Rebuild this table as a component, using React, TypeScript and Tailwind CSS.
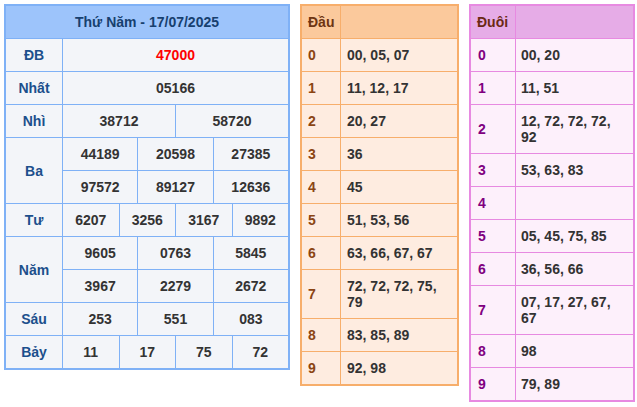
import React from "react";

const font = { fontFamily: '"Liberation Sans", Arial, sans-serif' };

function LeftTable() {
  const lab = "bg-[#f3f5f9] flex items-center justify-center text-[#1c4f8c] font-bold";
  const val = "bg-[#f3f5f9] flex items-center justify-center text-[#333333] font-bold";
  return (
    <div className="w-[286px] border-2 border-[#7fb1f6] bg-[#7fb1f6] grid grid-cols-[56px_repeat(12,minmax(0,1fr))] grid-rows-[repeat(11,32px)] gap-px text-[14px] leading-4">
      <div className="col-span-full bg-[#9dc4fb] flex items-center justify-center text-[#17406f] font-bold">Thứ Năm - 17/07/2025</div>
      <div className={lab}>ĐB</div>
      <div className={`${val} col-span-12 !text-[#ff0000]`}>47000</div>
      <div className={lab}>Nhất</div>
      <div className={`${val} col-span-12`}>05166</div>
      <div className={lab}>Nhì</div>
      <div className={`${val} col-span-6`}>38712</div>
      <div className={`${val} col-span-6`}>58720</div>
      <div className={`${lab} row-span-2`}>Ba</div>
      <div className={`${val} col-span-4`}>44189</div>
      <div className={`${val} col-span-4`}>20598</div>
      <div className={`${val} col-span-4`}>27385</div>
      <div className={`${val} col-span-4`}>97572</div>
      <div className={`${val} col-span-4`}>89127</div>
      <div className={`${val} col-span-4`}>12636</div>
      <div className={lab}>Tư</div>
      <div className={`${val} col-span-3`}>6207</div>
      <div className={`${val} col-span-3`}>3256</div>
      <div className={`${val} col-span-3`}>3167</div>
      <div className={`${val} col-span-3`}>9892</div>
      <div className={`${lab} row-span-2`}>Năm</div>
      <div className={`${val} col-span-4`}>9605</div>
      <div className={`${val} col-span-4`}>0763</div>
      <div className={`${val} col-span-4`}>5845</div>
      <div className={`${val} col-span-4`}>3967</div>
      <div className={`${val} col-span-4`}>2279</div>
      <div className={`${val} col-span-4`}>2672</div>
      <div className={lab}>Sáu</div>
      <div className={`${val} col-span-4`}>253</div>
      <div className={`${val} col-span-4`}>551</div>
      <div className={`${val} col-span-4`}>083</div>
      <div className={lab}>Bảy</div>
      <div className={`${val} col-span-3`}>11</div>
      <div className={`${val} col-span-3`}>17</div>
      <div className={`${val} col-span-3`}>75</div>
      <div className={`${val} col-span-3`}>72</div>
    </div>
  );
}

const dau = [
  "00, 05, 07",
  "11, 12, 17",
  "20, 27",
  "36",
  "45",
  "51, 53, 56",
  "63, 66, 67, 67",
  "72, 72, 72, 75, 79",
  "83, 85, 89",
  "92, 98",
];

const duoi = [
  "00, 20",
  "11, 51",
  "12, 72, 72, 72, 92",
  "53, 63, 83",
  "",
  "05, 45, 75, 85",
  "36, 56, 66",
  "07, 17, 27, 67, 67",
  "98",
  "79, 89",
];

function DauTable() {
  return (
    <div className="w-[159px] border-2 border-[#f7ae6b] bg-[#f7ae6b] grid grid-cols-[38px_minmax(0,1fr)] gap-px text-[14px] leading-4 font-bold">
      <div className="h-[32px] bg-[#fbc99c] flex items-center px-[6px] text-[#6e3512]">Đầu</div>
      <div className="h-[32px] bg-[#fbc99c]"></div>
      {dau.map((d, i) => (
        <React.Fragment key={i}>
          <div className="bg-[#feece0] flex items-center px-[6px] text-[#8b4513]">{i}</div>
          <div className="bg-[#feece0] flex items-center min-h-[32px] py-2 px-[6px] text-[#333333]">{d}</div>
        </React.Fragment>
      ))}
    </div>
  );
}

function DuoiTable() {
  return (
    <div className="w-[166px] border-2 border-[#e78ae1] bg-[#e78ae1] grid grid-cols-[44px_minmax(0,1fr)] gap-px text-[14px] leading-4 font-bold">
      <div className="h-[32px] bg-[#e6ace7] flex items-center px-[6px] text-[#6b2a14]">Đuôi</div>
      <div className="h-[32px] bg-[#e6ace7]"></div>
      {duoi.map((d, i) => (
        <React.Fragment key={i}>
          <div className="bg-[#fdf0fb] flex items-center px-[7px] text-[#800080]">{i}</div>
          <div className="bg-[#fdf0fb] flex items-center min-h-[32px] py-2 px-[5px] text-[#333333]">{d}</div>
        </React.Fragment>
      ))}
    </div>
  );
}

export default function App() {
  return (
    <div style={font} className="w-[637px] h-[407px] bg-white flex items-start gap-[10px] pl-[4px] pt-[4px]">
      <LeftTable />
      <DauTable />
      <DuoiTable />
    </div>
  );
}
